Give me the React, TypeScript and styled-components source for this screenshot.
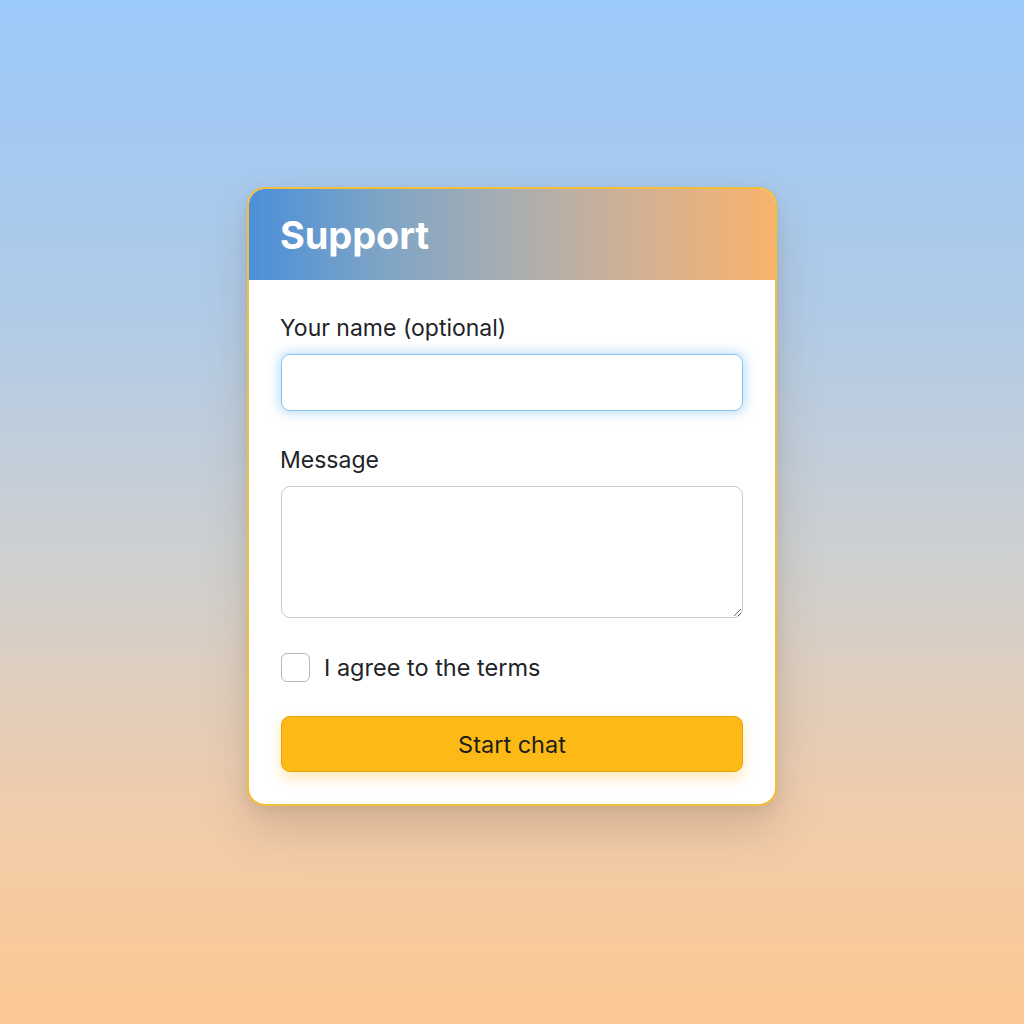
import React from 'react';
import styled, { createGlobalStyle } from 'styled-components';

const GlobalStyle = createGlobalStyle`
  html, body {
    margin: 0;
    padding: 0;
  }
  body {
    font-family: 'Inter', 'Noto Sans', sans-serif;
  }
  * {
    box-sizing: border-box;
  }
`;

const Page = styled.div`
  width: 1024px;
  height: 1024px;
  background: linear-gradient(180deg, #9bc9f9 0%, #b0cbe8 30%, #cfd0d0 55%, #f2ccaa 80%, #fcc994 100%);
  display: flex;
  justify-content: center;
  align-items: flex-start;
  padding-top: 187px;
`;

const Card = styled.div`
  width: 530px;
  background: #ffffff;
  border: 2px solid #f2bf3a;
  border-radius: 18px;
  overflow: hidden;
  box-shadow: 0 22px 44px rgba(120, 100, 80, 0.26), 0 4px 12px rgba(120, 100, 80, 0.12);
`;

const Header = styled.div`
  height: 91px;
  display: flex;
  align-items: center;
  padding: 0 31px;
  background: linear-gradient(90deg, #4b8fd9 0%, #7ea4c6 25%, #a9aeb1 50%, #d4b192 75%, #f9b36d 100%);
`;

const Title = styled.h1`
  margin: 0;
  font-size: 38px;
  font-weight: 700;
  color: #ffffff;
  letter-spacing: -0.1px;
`;

const Body = styled.form`
  display: flex;
  flex-direction: column;
  gap: 36px;
  padding: 35px 32px 32px;
`;

const Field = styled.div`
  display: flex;
  flex-direction: column;
  gap: 13px;
`;

const Label = styled.label`
  font-size: 23px;
  line-height: 26px;
  color: #222427;
  margin-left: -1px;
`;

const TextInput = styled.input`
  height: 57px;
  width: 100%;
  border: 1px solid #8ec5ea;
  border-radius: 9px;
  background: #fff;
  outline: none;
  box-shadow: 0 0 11px 2px rgba(120, 190, 245, 0.5);
  font: inherit;
  font-size: 20px;
  padding: 0 14px;
`;

const TextArea = styled.textarea`
  height: 132px;
  width: 100%;
  border: 1px solid #c9c9c9;
  border-radius: 9px;
  background: #fff;
  outline: none;
  resize: vertical;
  font: inherit;
  font-size: 20px;
  padding: 12px 14px;
  display: block;
`;

const CheckRow = styled.label`
  display: flex;
  align-items: center;
  gap: 14px;
  font-size: 23.5px;
  color: #222427;
  margin-top: -1px;
`;

const Box = styled.span`
  width: 29px;
  height: 29px;
  border: 1.5px solid #b8b8b8;
  border-radius: 6px;
  background: #fff;
  flex-shrink: 0;
`;

const Button = styled.button`
  height: 56px;
  width: 100%;
  border: 1px solid #e0a312;
  border-radius: 9px;
  background: #fdba17;
  color: #1e1c18;
  font: inherit;
  font-size: 23.5px;
  margin-top: -2px;
  box-shadow: 0 6px 14px rgba(253, 185, 40, 0.35);
  cursor: pointer;
`;

export default function App() {
  return (
    <>
      <GlobalStyle />
      <Page>
        <Card>
          <Header>
            <Title>Support</Title>
          </Header>
          <Body onSubmit={(e) => e.preventDefault()}>
            <Field>
              <Label htmlFor="name">Your name (optional)</Label>
              <TextInput id="name" type="text" />
            </Field>
            <Field>
              <Label htmlFor="msg">Message</Label>
              <TextArea id="msg" />
            </Field>
            <CheckRow>
              <Box />
              I agree to the terms
            </CheckRow>
            <Button type="submit">Start chat</Button>
          </Body>
        </Card>
      </Page>
    </>
  );
}
